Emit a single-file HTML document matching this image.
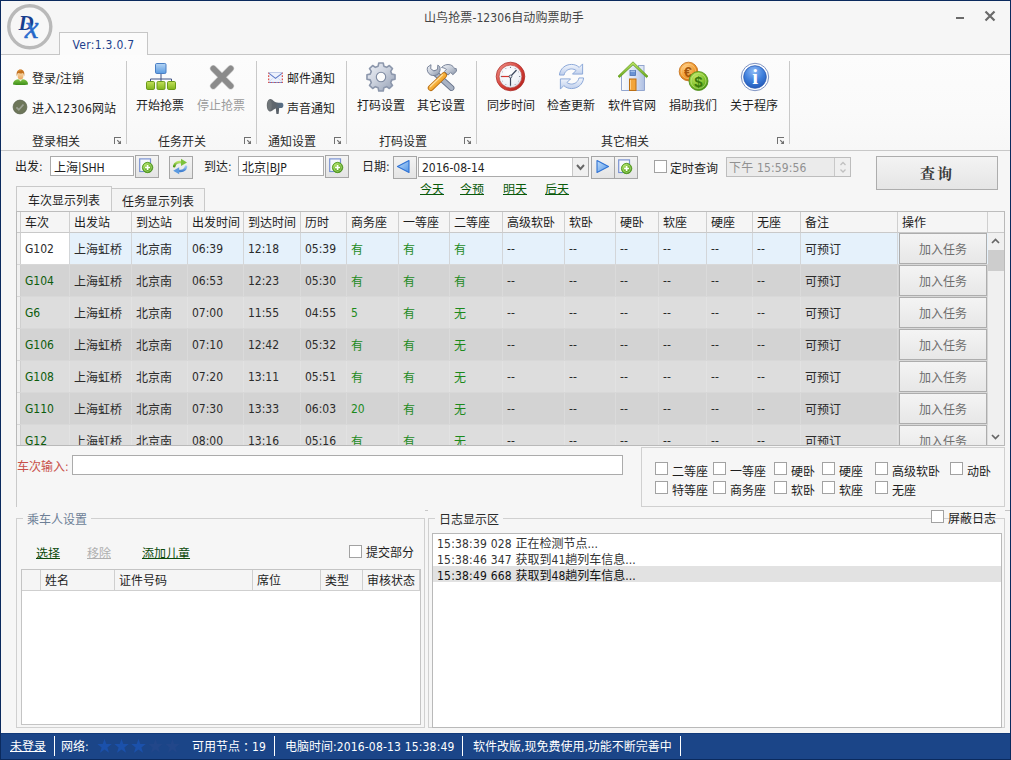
<!DOCTYPE html>
<html lang="zh-CN">
<head>
<meta charset="utf-8">
<title>山鸟抢票-12306自动购票助手</title>
<style>
*{box-sizing:border-box;margin:0;padding:0}
html,body{width:1011px;height:760px;overflow:hidden;background:#f6f6f6}
body{font-family:"DejaVu Sans Condensed","Liberation Sans","Noto Sans CJK SC",sans-serif;font-size:12px;color:#1e1e1e;line-height:16px}
#win{position:relative;width:1011px;height:760px;overflow:hidden;background:#f6f6f6}
.a{position:absolute;white-space:nowrap}
.frame{position:absolute;left:0;top:0;width:1011px;height:760px;border:1px solid #0b2a5e;pointer-events:none;z-index:50}
/* ribbon */
#titlebar{position:absolute;left:0;top:0;width:1011px;height:54px;background:#f6f6f6}
#ribbon{position:absolute;left:0;top:54px;width:1011px;height:97px;background:linear-gradient(#fcfcfc,#fafafa 60%,#f7f7f7);border-top:1px solid #c6c6c6;border-bottom:1px solid #c8c8c8}
#rtab{position:absolute;left:59px;top:32px;width:89px;letter-spacing:.3px;height:23px;background:#fbfbfb;border:1px solid #c6c6c6;border-bottom:0;color:#1d3f8c;text-align:center;line-height:24px;z-index:3}
.sep{position:absolute;top:61px;width:1px;height:83px;background:#c9c9c9}
.cap{position:absolute;top:134px;height:16px;text-align:center;color:#2a2a2a}
.lbl{position:absolute;top:98px;width:70px;text-align:center}
.dl{position:absolute;top:137px;width:8px;height:8px}
.ico{position:absolute}
/* controls */
.inp{position:absolute;background:#fff;border:1px solid #ababab;height:20px;line-height:20px;padding-left:3px}
.sbtn{position:absolute;width:24px;height:23px;border:1px solid #a6a6a6;background:linear-gradient(#f3f3f3,#e4e4e4)}
.cb{position:absolute;width:13px;height:13px;border:1px solid #a2a2a2;background:#fff}
.lnk{position:absolute;color:#0a5a0a;text-decoration:underline;text-underline-offset:0px}

/* tabs + grid */
.tab{position:absolute;border:1px solid #c9c9c9;border-bottom:0;text-align:center}
#grid{position:absolute;left:16px;top:211px;width:989px;height:235px;border:1px solid #b9b9b9;border-top-color:#bdbdbd;background:#d8d8d8;overflow:hidden}
#grid .hd{position:absolute;top:0;height:21px;line-height:22px;padding-left:4px;background:#f5f5f5;border-right:1px solid #cfcfcf;border-bottom:1px solid #c9c9c9;color:#1e1e1e}
.row{position:absolute;left:0;width:972px;height:31px}
.row i{position:absolute;top:0;height:31px;line-height:35px;padding-left:4px;font-style:normal;border-right:1px solid rgba(255,255,255,.16);color:#2b2b2b;white-space:nowrap;overflow:hidden}
.row .n{line-height:33px}
.row .g{color:#1c8a1c}
.row .t{color:#0c5c0c}
.rd{background:#d3d3d3}.rl{background:#dddddd}.rs{background:#e5f1fb}
.rs i{border-right-color:#d3d6d9}
.jb{position:absolute;left:882px;top:0;width:88px;height:31px;border:1px solid #adadad;background:linear-gradient(#f4f4f4,#e7e7e7);text-align:center;line-height:33px;color:#6e6e6e}

.gb{position:absolute;border:1px solid #d0d0d0}
.gbt{position:absolute;background:#f6f6f6;padding:0 4px;line-height:16px}
.ph{position:absolute;top:0;height:21px;line-height:23px;padding-left:4px;background:#f5f5f5;border-right:1px solid #cfcfcf;border-bottom:1px solid #cfcfcf}
#status{position:absolute;left:0;top:733px;width:1011px;height:27px;background:#1b4588;color:#fff;border-top:1px solid #123a7a}
#status .a{top:5px;color:#fff}
#status .sp{position:absolute;top:2px;width:1px;height:20px;background:#fff}
</style>
</head>
<body>
<div id="win">
<div id="titlebar"></div>
<div class="a" style="left:424px;top:10px;letter-spacing:.1px;color:#444">山鸟抢票-12306自动购票助手</div>
<svg class="a" style="left:5px;top:4px" width="50" height="50" viewBox="0 0 50 50">
<defs><linearGradient id="glx" x1="0" y1="0" x2="1" y2="1"><stop offset="0" stop-color="#3f86e0"/><stop offset="1" stop-color="#1656b8"/></linearGradient></defs>
<circle cx="24.800" cy="22.800" r="21" fill="#f7f7f7" stroke="#b9b9b9" stroke-width="3.400"/>
<text x="13.500" y="25.700" font-family="'Liberation Serif',serif" font-style="italic" font-weight="bold" font-size="21" fill="#173f8f">D</text>
<text x="19.800" y="33.600" font-family="'Liberation Serif',serif" font-style="italic" font-size="31" stroke="#2a6cd0" stroke-width=".5" fill="url(#glx)">x</text>
</svg>
<div class="a" style="left:956px;top:17px;width:8px;height:2px;background:#6a6a6a"></div>
<svg class="a" style="left:984px;top:10px" width="12" height="12" viewBox="0 0 12 12"><path d="M1.5 1.5 L10.5 10.5 M10.5 1.5 L1.5 10.5" stroke="#6a6a6a" stroke-width="2.2" fill="none"/></svg>
<div id="ribbon"></div>
<div id="rtab">Ver:1.3.0.7</div>
<svg class="ico" style="left:12px;top:69px" width="17" height="17" viewBox="0 0 17 17">
<defs><linearGradient id="gub" x1="0" y1="0" x2="0" y2="1"><stop offset="0" stop-color="#7fc544"/><stop offset="1" stop-color="#3c8c18"/></linearGradient>
<linearGradient id="guf" x1="0" y1="0" x2="0" y2="1"><stop offset="0" stop-color="#fbe0b0"/><stop offset="1" stop-color="#e9a55c"/></linearGradient></defs>
<path d="M1 15.400c0-3.200 2.300-4.700 5-5.100h5c2.700.4 5 1.900 5 5.100-3 .9-12 .9-15 0z" fill="url(#gub)"/>
<path d="M6.300 10.100l2.200 2.400 2.200-2.400z" fill="#e7f2d6"/>
<ellipse cx="8.500" cy="6.600" rx="3" ry="3.900" fill="url(#guf)"/>
<path d="M4.900 7.600C3.900 3 5.800.6 8.500.6s4.600 2.400 3.600 7c-.1-1.800-.6-3-1.300-3.700-1.300.7-3.500.7-4.700.1-.6.700-1.100 1.800-1.200 3.600z" fill="#c4721f"/>
<path d="M6 2.300c.8-.9 2-1.300 3.200-1.100" stroke="#e8a04a" stroke-width=".8" fill="none"/></svg>
<svg class="ico" style="left:12px;top:99px" width="16" height="16" viewBox="0 0 16 16">
<circle cx="8" cy="8" r="6.900" fill="#6d7659" stroke="#5d6650" stroke-width=".8"/>
<path d="M4.400 8.300l2.400 2.400 4.700-5.200" stroke="#9ca194" stroke-width="1.700" fill="none"/></svg>
<div class="a" style="left:32px;top:71px">登录/注销</div>
<div class="a" style="left:32px;top:101px">进入<span style="letter-spacing:.35px">12306</span>网站</div>
<div class="cap" style="left:16px;width:80px">登录相关</div>
<svg class="dl" style="left:114px" viewBox="0 0 8 8"><path d="M0.5 7V0.5H7" stroke="#707070" fill="none" shape-rendering="crispEdges"/><path d="M3.200 3.200L6 6" stroke="#707070" stroke-width="1.100" fill="none"/><path d="M7 3.600V7H3.600z" fill="#707070"/></svg>
<div class="sep" style="left:126px"></div>
<svg class="ico" style="left:145px;top:62px" width="32" height="30" viewBox="0 0 32 30">
<defs><linearGradient id="gb" x1="0" y1="0" x2="0" y2="1"><stop offset="0" stop-color="#b4d4f4"/><stop offset="1" stop-color="#5b9be0"/></linearGradient>
<linearGradient id="gg" x1="0" y1="0" x2="0" y2="1"><stop offset="0" stop-color="#c3e05a"/><stop offset="1" stop-color="#7fb51c"/></linearGradient></defs>
<path d="M16 11v6M5.500 21v-4h21v4M16 17v4" stroke="#3f5285" stroke-width="1" fill="none"/>
<rect x="10.500" y="1.500" width="10.500" height="10" rx="1.200" fill="url(#gb)" stroke="#4a7fc4"/>
<rect x="1.500" y="19.500" width="8" height="8" rx="1.200" fill="url(#gg)" stroke="#6a9a18"/>
<rect x="12" y="19.500" width="8" height="8" rx="1.200" fill="url(#gg)" stroke="#6a9a18"/>
<rect x="22.500" y="19.500" width="8" height="8" rx="1.200" fill="url(#gg)" stroke="#6a9a18"/></svg>
<svg class="ico" style="left:207px;top:63px" width="29" height="28" viewBox="0 0 29 28">
<defs><linearGradient id="gx" x1="0" y1="0" x2="0" y2="1" gradientUnits="userSpaceOnUse"><stop offset="0" stop-color="#c6c6c6"/><stop offset=".5" stop-color="#a8a8a8"/><stop offset="1" stop-color="#8b8b8b"/></linearGradient></defs>
<path d="M6.300 5.500L23.700 23M23.700 5.500L6.300 23" stroke="#cfcfcf" stroke-width="6.800" stroke-linecap="round" fill="none"/>
<path d="M6.300 5.500L23.700 23M23.700 5.500L6.300 23" stroke="url(#gx)" stroke-width="5.600" stroke-linecap="round" fill="none"/></svg>
<div class="lbl" style="left:125px">开始抢票</div>
<div class="lbl" style="left:186px;color:#9a9a9a">停止抢票</div>
<div class="cap" style="left:142px;width:80px">任务开关</div>
<svg class="dl" style="left:244px" viewBox="0 0 8 8"><path d="M0.5 7V0.5H7" stroke="#707070" fill="none" shape-rendering="crispEdges"/><path d="M3.200 3.200L6 6" stroke="#707070" stroke-width="1.100" fill="none"/><path d="M7 3.600V7H3.600z" fill="#707070"/></svg>
<div class="sep" style="left:256px"></div>
<svg class="ico" style="left:268px;top:72px" width="15" height="11" viewBox="0 0 16 12">
<rect x=".5" y=".5" width="15" height="11" fill="#edf2fc"/>
<path d="M1 1.500l7 5.500 7-5.500" stroke="#5b78c8" stroke-width="1.100" fill="none"/>
<path d="M1 10.500l4-3.500M15 10.500l-4-3.500" stroke="#cfd9f0" stroke-width="1" fill="none"/>
<path d="M.5 0v12" stroke="#e0564e" stroke-width="1.400" stroke-dasharray="2 1.500"/>
<path d="M15.500 0v12" stroke="#e0564e" stroke-width="1.400" stroke-dasharray="2 1.500"/>
<path d="M0 11.500h16" stroke="#e0564e" stroke-width="1.400" stroke-dasharray="1.500 1.500"/>
<path d="M1.500 11.500h16" stroke="#4f6fc6" stroke-width="1.400" stroke-dasharray="1.500 1.500"/>
<path d="M0 .5h16" stroke="#b9c6e6" stroke-width="1"/></svg>
<svg class="ico" style="left:266px;top:98px" width="18" height="17" viewBox="0 0 18 17">
<defs><linearGradient id="ghn" x1="0" y1="0" x2="1" y2="0"><stop offset="0" stop-color="#676b6e"/><stop offset=".55" stop-color="#5d656d"/><stop offset="1" stop-color="#55708c"/></linearGradient></defs>
<path d="M9.800 9.500h3.400l-.5 6c-.1.800-2.300.800-2.400 0z" fill="#596068"/>
<path d="M3.500 1.200c1.500-.5 3 .6 4.200 1.800 1.300 1.200 2.800 1.700 4.600 1.700h3.200c1.300 0 1.900 1.300 1.900 2.600s-.6 2.600-1.900 2.600h-3.200c-1.800 0-3.300.5-4.600 1.700-1.200 1.200-2.700 2.300-4.200 1.800C1.700 12.800.8 10.200.8 7.300S1.700 1.800 3.500 1.200z" fill="url(#ghn)"/>
<ellipse cx="3.600" cy="7.300" rx="2.100" ry="5.300" fill="#7a7f83" opacity=".55"/></svg>
<div class="a" style="left:287px;top:71px">邮件通知</div>
<div class="a" style="left:287px;top:101px">声音通知</div>
<div class="cap" style="left:252px;width:80px">通知设置</div>
<svg class="dl" style="left:334px" viewBox="0 0 8 8"><path d="M0.5 7V0.5H7" stroke="#707070" fill="none" shape-rendering="crispEdges"/><path d="M3.200 3.200L6 6" stroke="#707070" stroke-width="1.100" fill="none"/><path d="M7 3.600V7H3.600z" fill="#707070"/></svg>
<div class="sep" style="left:346px"></div>
<svg class="ico" style="left:365px;top:61px" width="32" height="32" viewBox="0 0 32 32">
<defs><linearGradient id="gge" x1="0" y1="0" x2="1" y2="1"><stop offset="0" stop-color="#f1f3f8"/><stop offset=".45" stop-color="#cdd3df"/><stop offset="1" stop-color="#929db2"/></linearGradient></defs>
<path d="M13.13 5.17 L13.78 1.97 L18.22 1.97 L18.87 5.17 L21.63 6.32 L24.35 4.51 L27.49 7.65 L25.68 10.37 L26.83 13.13 L30.03 13.78 L30.03 18.22 L26.83 18.87 L25.68 21.63 L27.49 24.35 L24.35 27.49 L21.63 25.68 L18.87 26.83 L18.22 30.03 L13.78 30.03 L13.13 26.83 L10.37 25.68 L7.65 27.49 L4.51 24.35 L6.32 21.63 L5.17 18.87 L1.97 18.22 L1.97 13.78 L5.17 13.13 L6.32 10.37 L4.51 7.65 L7.65 4.51 L10.37 6.32Z" fill="url(#gge)" stroke="#8c97ac" stroke-width="1.600" stroke-linejoin="round"/>
<circle cx="16" cy="16" r="4.700" fill="#fbfbfb" stroke="#7d89a0" stroke-width="1.100"/></svg>
<svg class="ico" style="left:425px;top:62px" width="32" height="30" viewBox="0 0 32 30">
<defs><linearGradient id="gor" x1="0" y1="0" x2="1" y2="1"><stop offset="0" stop-color="#ffe09a"/><stop offset=".5" stop-color="#f7b13a"/><stop offset="1" stop-color="#d97a08"/></linearGradient>
<linearGradient id="gst" x1="0" y1="0" x2="1" y2="1"><stop offset="0" stop-color="#f3f5f9"/><stop offset=".5" stop-color="#c3cad6"/><stop offset="1" stop-color="#8893a6"/></linearGradient></defs>
<path d="M10 11L26.500 26" stroke="#67738a" stroke-width="5.800" stroke-linecap="round" fill="none"/>
<path d="M10 11L26.500 26" stroke="#a9b3c4" stroke-width="4.200" stroke-linecap="round" fill="none"/>
<path d="M2.500 5.200c-.9 3.100.4 6.300 3.100 7.700 2.600 1.300 5.900.8 7.800-1.200 1.700-1.800 2.200-4.600 1.300-7.100l-1.900-1.500-.3 4.300-3.600 1.600-3.200-2.300.3-4z" fill="url(#gst)" stroke="#6f7b92" stroke-width=".9" stroke-linejoin="round"/>
<path d="M16.500 5.500c2.200-2.500 5.800-3.700 9-2.600 2.100.7 3.300 2.200 4 3.800l1.700-.2.300 2.700-3.600 3.500-2.200-2.200-2.600 2.600-3.700-3.700 2-2c-1.500-1.300-3.300-1.700-4.900-1.900z" fill="url(#gst)" stroke="#6f7b92" stroke-width=".9" stroke-linejoin="round"/>
<path d="M5.800 26L19 13.300" stroke="#b96d0e" stroke-width="6" stroke-linecap="round" fill="none"/>
<path d="M5.800 26L19 13.300" stroke="url(#gor)" stroke-width="4.400" stroke-linecap="round" fill="none"/>
<path d="M5.300 24.500L17.500 12.800" stroke="#ffe9b8" stroke-width="1.200" stroke-linecap="round" fill="none" opacity=".8"/>
</svg>
<div class="lbl" style="left:346px">打码设置</div>
<div class="lbl" style="left:406px">其它设置</div>
<div class="cap" style="left:363px;width:80px">打码设置</div>
<svg class="dl" style="left:464px" viewBox="0 0 8 8"><path d="M0.5 7V0.5H7" stroke="#707070" fill="none" shape-rendering="crispEdges"/><path d="M3.200 3.200L6 6" stroke="#707070" stroke-width="1.100" fill="none"/><path d="M7 3.600V7H3.600z" fill="#707070"/></svg>
<div class="sep" style="left:476px"></div>
<svg class="ico" style="left:495px;top:61px" width="31" height="31" viewBox="0 0 31 31">
<defs><radialGradient id="gcf" cx=".4" cy=".35" r=".75"><stop offset="0" stop-color="#ffffff"/><stop offset=".7" stop-color="#eef1f7"/><stop offset="1" stop-color="#cfd6e4"/></radialGradient>
<linearGradient id="gcr" x1="0" y1="0" x2="1" y2="1"><stop offset="0" stop-color="#f39a90"/><stop offset=".5" stop-color="#d6423a"/><stop offset="1" stop-color="#b01c18"/></linearGradient></defs>
<circle cx="15.500" cy="15.500" r="14.300" fill="url(#gcr)" stroke="#a82622" stroke-width=".7"/>
<circle cx="15.500" cy="15.500" r="11.400" fill="url(#gcf)" stroke="#b9463f" stroke-width=".7"/>
<path d="M15.500 15.500L21.500 9" stroke="#3a465c" stroke-width="1.200"/><path d="M15.500 15.500v9" stroke="#3a465c" stroke-width="1.200"/><path d="M15.500 15.500H6" stroke="#d5362f" stroke-width="1.200"/>
<circle cx="15.500" cy="15.500" r="1.400" fill="#e9edf4" stroke="#3a465c" stroke-width=".8"/>
<g fill="#5d6779"><circle cx="15.500" cy="6.300" r=".6"/><circle cx="24.700" cy="15.500" r=".6"/><circle cx="15.500" cy="24.700" r=".6"/><circle cx="6.300" cy="15.500" r=".6"/><circle cx="20.100" cy="7.500" r=".45"/><circle cx="23.500" cy="10.900" r=".45"/><circle cx="23.500" cy="20.100" r=".45"/><circle cx="20.100" cy="23.500" r=".45"/><circle cx="10.900" cy="23.500" r=".45"/><circle cx="7.500" cy="20.100" r=".45"/><circle cx="7.500" cy="10.900" r=".45"/><circle cx="10.900" cy="7.500" r=".45"/></g></svg>
<svg class="ico" style="left:557px;top:62px" width="29" height="29" viewBox="0 0 30 30">
<defs><linearGradient id="grf" x1="0" y1="0" x2="0" y2="1"><stop offset="0" stop-color="#f4f7fd"/><stop offset="1" stop-color="#bccdeb"/></linearGradient></defs>
<path d="M2.500 13.500C3 7 8.500 2.500 15 2.500c3.300 0 6 1.200 8 3.100L26.500 2v10.500H16l3.700-3.700C18.500 7.800 16.800 7.200 15 7.200c-3.800 0-7 2.600-7.700 6.300z" fill="url(#grf)" stroke="#8aa7d8" stroke-width="1" stroke-linejoin="round"/>
<path d="M27.500 16.500C27 23 21.500 27.500 15 27.500c-3.300 0-6-1.200-8-3.100L3.500 28V17.500H14l-3.700 3.700c1.200 1 2.900 1.600 4.700 1.600 3.800 0 7-2.600 7.700-6.300z" fill="url(#grf)" stroke="#8aa7d8" stroke-width="1" stroke-linejoin="round"/></svg>
<svg class="ico" style="left:617px;top:60px" width="32" height="32" viewBox="0 0 32 32">
<defs><linearGradient id="ghw" x1="0" y1="0" x2="1" y2="0"><stop offset="0" stop-color="#fbfcfe"/><stop offset=".5" stop-color="#dfe7f6"/><stop offset="1" stop-color="#aebfe2"/></linearGradient>
<linearGradient id="ghr" x1="0" y1="0" x2="0" y2="1"><stop offset="0" stop-color="#c2e86a"/><stop offset="1" stop-color="#67a818"/></linearGradient></defs>
<rect x="21.500" y="5.500" width="5.500" height="9" fill="#dfe6f5" stroke="#93a6cf" stroke-width="1"/>
<path d="M4.500 15L16 4.500 27.500 15v15.500h-23z" fill="url(#ghw)" stroke="#93a6cf" stroke-width="1"/>
<path d="M1 16.200L16 1.800 31 16.200l-1.500 1.400L16 4.800 2.500 17.600z" fill="url(#ghr)" stroke="#5a9614" stroke-width=".7" stroke-linejoin="round"/>
<rect x="12.500" y="19" width="6.500" height="11.500" fill="#f3a53a" stroke="#bb6f14" stroke-width="1"/>
<path d="M13.500 20v9.500" stroke="#ffd08a" stroke-width="1"/>
<rect x="13" y="10.500" width="5.500" height="5" fill="#6a93d4" stroke="#4a70b2" stroke-width=".8"/>
<path d="M13.500 11.200h4.500" stroke="#b9d0f0" stroke-width="1"/></svg>
<svg class="ico" style="left:678px;top:61px" width="32" height="31" viewBox="0 0 32 31">
<defs><radialGradient id="gco" cx=".38" cy=".32" r=".75"><stop offset="0" stop-color="#ffd08a"/><stop offset=".6" stop-color="#f09a30"/><stop offset="1" stop-color="#c9660a"/></radialGradient>
<radialGradient id="gcg" cx=".38" cy=".32" r=".75"><stop offset="0" stop-color="#c3e86a"/><stop offset=".6" stop-color="#7fc02a"/><stop offset="1" stop-color="#3f8a10"/></radialGradient></defs>
<circle cx="10.500" cy="10.500" r="9.300" fill="url(#gco)" stroke="#c16a10" stroke-width=".8"/>
<circle cx="10.500" cy="10.500" r="7.200" fill="none" stroke="#ffdca0" stroke-width=".8" opacity=".6"/>
<text x="9.800" y="15.500" text-anchor="middle" font-family="'Liberation Sans',sans-serif" font-weight="bold" font-size="14" fill="#a4550c">€</text>
<circle cx="20.500" cy="20" r="9.500" fill="url(#gcg)" stroke="#4a8c14" stroke-width=".8"/>
<circle cx="20.500" cy="20" r="7.500" fill="none" stroke="#d2f09a" stroke-width=".8" opacity=".7"/>
<text x="20.500" y="25.500" text-anchor="middle" font-family="'Liberation Sans',sans-serif" font-weight="bold" font-size="15" fill="#3a7a0c">$</text></svg>
<svg class="ico" style="left:739px;top:61px" width="32" height="32" viewBox="0 0 32 32">
<defs><radialGradient id="gin" cx=".45" cy=".25" r=".85"><stop offset="0" stop-color="#8fbaf5"/><stop offset=".5" stop-color="#3f7fdc"/><stop offset="1" stop-color="#1a4fae"/></radialGradient></defs>
<circle cx="16" cy="16" r="13.700" fill="#fafcff" stroke="#7f93c2" stroke-width="1"/>
<circle cx="16" cy="16" r="11.300" fill="url(#gin)" stroke="#2c5cb4" stroke-width=".8"/>
<text x="16.200" y="23.300" text-anchor="middle" font-family="'Liberation Serif',serif" font-weight="bold" font-size="21" fill="#fff">i</text></svg>
<div class="lbl" style="left:476px">同步时间</div>
<div class="lbl" style="left:536px">检查更新</div>
<div class="lbl" style="left:597px">软件官网</div>
<div class="lbl" style="left:658px">捐助我们</div>
<div class="lbl" style="left:719px">关于程序</div>
<div class="cap" style="left:585px;width:80px">其它相关</div>
<svg class="dl" style="left:777px" viewBox="0 0 8 8"><path d="M0.5 7V0.5H7" stroke="#707070" fill="none" shape-rendering="crispEdges"/><path d="M3.200 3.200L6 6" stroke="#707070" stroke-width="1.100" fill="none"/><path d="M7 3.600V7H3.600z" fill="#707070"/></svg>
<div class="sep" style="left:789px"></div>
<div class="a" style="left:15px;top:159px">出发:</div>
<div class="inp" style="left:50px;top:156px;width:84px;line-height:22px">上海|SHH</div>
<div class="sbtn" style="left:135px;top:155px"><svg style="position:absolute;left:0;top:0" width="22" height="21" viewBox="0 0 22 21">
<defs><radialGradient id="gpp" cx=".35" cy=".3" r=".8"><stop offset="0" stop-color="#a5dc55"/><stop offset=".6" stop-color="#62ad1f"/><stop offset="1" stop-color="#3c8a10"/></radialGradient></defs>
<rect x="3.700" y="2.900" width="10.800" height="12.600" fill="#f6f8fd" stroke="#7a92d2" stroke-width="1.200"/>
<circle cx="11.600" cy="11.500" r="5.200" fill="url(#gpp)" stroke="#4a9416" stroke-width=".8"/>
<circle cx="11.600" cy="11.500" r="3.900" fill="none" stroke="#d6f0b4" stroke-width=".7" opacity=".75"/><path d="M11.600 9v5M9.100 11.500h5" stroke="#fff" stroke-width="1.600"/></svg></div>
<div class="sbtn" style="left:169px;top:156px"><svg style="position:absolute;left:0;top:0" width="22" height="21" viewBox="0 0 22 21">
<defs><linearGradient id="grg" x1="0" y1="0" x2="0" y2="1"><stop offset="0" stop-color="#b5e26a"/><stop offset="1" stop-color="#4f9a14"/></linearGradient>
<linearGradient id="grb" x1="0" y1="0" x2="0" y2="1"><stop offset="0" stop-color="#9cc6f2"/><stop offset="1" stop-color="#3f7fd0"/></linearGradient></defs>
<path d="M4.200 9.200C4.800 5.700 8.300 4.300 12 5.300" stroke="url(#grg)" stroke-width="2.600" fill="none" stroke-linecap="round"/>
<path d="M11 1.800l6 3.600-6 3.500z" fill="#7cc23a"/>
<path d="M16 9.800c-.6 3.500-4.100 4.900-7.800 3.900" stroke="url(#grb)" stroke-width="2.600" fill="none" stroke-linecap="round"/>
<path d="M9.200 10.200l-6 3.600 6 3.500z" fill="#5b9ae0"/></svg></div>
<div class="a" style="left:204px;top:159px">到达:</div>
<div class="inp" style="left:238px;top:156px;width:86px;line-height:22px">北京|BJP</div>
<div class="sbtn" style="left:325px;top:155px"><svg style="position:absolute;left:0;top:0" width="22" height="21" viewBox="0 0 22 21">
<defs><radialGradient id="gpp" cx=".35" cy=".3" r=".8"><stop offset="0" stop-color="#a5dc55"/><stop offset=".6" stop-color="#62ad1f"/><stop offset="1" stop-color="#3c8a10"/></radialGradient></defs>
<rect x="3.700" y="2.900" width="10.800" height="12.600" fill="#f6f8fd" stroke="#7a92d2" stroke-width="1.200"/>
<circle cx="11.600" cy="11.500" r="5.200" fill="url(#gpp)" stroke="#4a9416" stroke-width=".8"/>
<circle cx="11.600" cy="11.500" r="3.900" fill="none" stroke="#d6f0b4" stroke-width=".7" opacity=".75"/><path d="M11.600 9v5M9.100 11.500h5" stroke="#fff" stroke-width="1.600"/></svg></div>
<div class="a" style="left:362px;top:159px">日期:</div>
<div class="sbtn" style="left:393px;top:156px"><svg style="position:absolute;left:0;top:0" width="22" height="21" viewBox="0 0 22 21">
<defs><linearGradient id="garl" x1="0" y1="0" x2="1" y2="1"><stop offset="0" stop-color="#c4dffa"/><stop offset="1" stop-color="#4f93e6"/></linearGradient></defs>
<polygon points="15 3.500 3.500 9.500 15 15.500" fill="url(#garl)" stroke="#2f72d4" stroke-width="1.100" stroke-linejoin="round" transform="translate(0 0)"/></svg></div>
<div class="inp" style="left:418px;top:157px;width:171px;padding-left:3px;line-height:20px">2016-08-14<div style="position:absolute;right:0;top:0;width:16px;height:18px;border-left:1px solid #c8c8c8;background:#f0f0f0"><svg style="position:absolute;left:3px;top:6px" width="9" height="7" viewBox="0 0 9 7"><path d="M1 1l3.500 4L8 1" stroke="#666" stroke-width="1.900" fill="none"/></svg></div></div>
<div class="sbtn" style="left:591px;top:156px"><svg style="position:absolute;left:0;top:0" width="22" height="21" viewBox="0 0 22 21">
<defs><linearGradient id="garr" x1="0" y1="0" x2="1" y2="1"><stop offset="0" stop-color="#c4dffa"/><stop offset="1" stop-color="#4f93e6"/></linearGradient></defs>
<polygon points="3.500 3.500 15 9.500 3.500 15.500" fill="url(#garr)" stroke="#2f72d4" stroke-width="1.100" stroke-linejoin="round" transform="translate(1.5 0)"/></svg></div>
<div class="sbtn" style="left:614px;top:156px"><svg style="position:absolute;left:0;top:0" width="22" height="21" viewBox="0 0 22 21">
<defs><radialGradient id="gpp" cx=".35" cy=".3" r=".8"><stop offset="0" stop-color="#a5dc55"/><stop offset=".6" stop-color="#62ad1f"/><stop offset="1" stop-color="#3c8a10"/></radialGradient></defs>
<rect x="3.700" y="2.900" width="10.800" height="12.600" fill="#f6f8fd" stroke="#7a92d2" stroke-width="1.200"/>
<circle cx="11.600" cy="11.500" r="5.200" fill="url(#gpp)" stroke="#4a9416" stroke-width=".8"/>
<circle cx="11.600" cy="11.500" r="3.900" fill="none" stroke="#d6f0b4" stroke-width=".7" opacity=".75"/><path d="M11.600 9v5M9.100 11.500h5" stroke="#fff" stroke-width="1.600"/></svg></div>
<div class="cb" style="left:654px;top:160px"></div>
<div class="a" style="left:670px;top:161px">定时查询</div>
<div class="inp" style="left:726px;top:157px;width:125px;height:20px;background:#ebebeb;border-color:#bdbdbd;color:#919191;line-height:20px;padding-left:2px;letter-spacing:.15px">下午 15:59:56<div style="position:absolute;right:0;top:0;width:16px;height:18px;border-left:1px solid #c8c8c8;background:#efefef"><svg style="position:absolute;left:4px;top:3px" width="8" height="13" viewBox="0 0 8 13"><path d="M1.500 4l2.500-2.500L6.500 4M1.500 8.500l2.500 2.500 2.500-2.500" stroke="#c0c0c0" stroke-width="1.300" fill="none"/></svg></div></div>
<div class="a" style="left:876px;top:156px;width:122px;height:34px;border:1px solid #adadad;background:linear-gradient(#f3f3f3,#e5e5e5);text-align:center;line-height:32px;font-family:'Noto Serif CJK SC','Liberation Serif',serif;font-weight:bold;font-size:15px;letter-spacing:2px;color:#3a3a3a">查询</div>
<div class="lnk" style="left:420px;top:182px">今天</div>
<div class="lnk" style="left:460px;top:182px">今预</div>
<div class="lnk" style="left:503px;top:182px">明天</div>
<div class="lnk" style="left:545px;top:182px">后天</div>
<div class="a" style="left:16px;top:186px;width:1px;height:321px;background:#cacaca"></div>
<div class="tab" style="left:16px;top:186px;width:96px;height:25px;line-height:29px;background:#f6f6f6">车次显示列表</div>
<div class="tab" style="left:111px;top:188px;width:94px;height:23px;line-height:27px;background:#f3f3f3">任务显示列表</div>
<div id="grid">
<div class="hd" style="left:0px;width:4px;padding:0;"></div>
<div class="hd" style="left:4px;width:49px;">车次</div>
<div class="hd" style="left:53px;width:62px;">出发站</div>
<div class="hd" style="left:115px;width:56px;">到达站</div>
<div class="hd" style="left:171px;width:56px;">出发时间</div>
<div class="hd" style="left:227px;width:57px;">到达时间</div>
<div class="hd" style="left:284px;width:46px;">历时</div>
<div class="hd" style="left:330px;width:52px;">商务座</div>
<div class="hd" style="left:382px;width:51px;">一等座</div>
<div class="hd" style="left:433px;width:53px;">二等座</div>
<div class="hd" style="left:486px;width:62px;">高级软卧</div>
<div class="hd" style="left:548px;width:51px;">软卧</div>
<div class="hd" style="left:599px;width:43px;">硬卧</div>
<div class="hd" style="left:642px;width:48px;">软座</div>
<div class="hd" style="left:690px;width:46px;">硬座</div>
<div class="hd" style="left:736px;width:48px;">无座</div>
<div class="hd" style="left:784px;width:97px;">备注</div>
<div class="hd" style="left:881px;width:90px;">操作</div>
<div class="hd" style="left:971px;width:16px;padding:0;border-right:0"></div>
<div class="row rs" style="top:21px">
<i style="left:0px;width:4px;padding:0;background:#f1f1f1;border-right-color:#cfcfcf;"></i>
<i class="n" style="left:4px;width:49px;background:#fff;">G102</i>
<i style="left:53px;width:62px;">上海虹桥</i>
<i style="left:115px;width:56px;">北京南</i>
<i class="n" style="left:171px;width:56px;">06:39</i>
<i class="n" style="left:227px;width:57px;">12:18</i>
<i class="n" style="left:284px;width:46px;">05:39</i>
<i class="g" style="left:330px;width:52px;">有</i>
<i class="g" style="left:382px;width:51px;">有</i>
<i class="g" style="left:433px;width:53px;">有</i>
<i class="n" style="left:486px;width:62px;">--</i>
<i class="n" style="left:548px;width:51px;">--</i>
<i class="n" style="left:599px;width:43px;">--</i>
<i class="n" style="left:642px;width:48px;">--</i>
<i class="n" style="left:690px;width:46px;">--</i>
<i class="n" style="left:736px;width:48px;">--</i>
<i style="left:784px;width:97px;">可预订</i>
<div class="jb">加入任务</div></div>
<div class="row rd" style="top:53px">
<i style="left:0px;width:4px;padding:0;background:#f1f1f1;border-right-color:#cfcfcf;"></i>
<i class="t n" style="left:4px;width:49px;">G104</i>
<i style="left:53px;width:62px;">上海虹桥</i>
<i style="left:115px;width:56px;">北京南</i>
<i class="n" style="left:171px;width:56px;">06:53</i>
<i class="n" style="left:227px;width:57px;">12:23</i>
<i class="n" style="left:284px;width:46px;">05:30</i>
<i class="g" style="left:330px;width:52px;">有</i>
<i class="g" style="left:382px;width:51px;">有</i>
<i class="g" style="left:433px;width:53px;">有</i>
<i class="n" style="left:486px;width:62px;">--</i>
<i class="n" style="left:548px;width:51px;">--</i>
<i class="n" style="left:599px;width:43px;">--</i>
<i class="n" style="left:642px;width:48px;">--</i>
<i class="n" style="left:690px;width:46px;">--</i>
<i class="n" style="left:736px;width:48px;">--</i>
<i style="left:784px;width:97px;">可预订</i>
<div class="jb">加入任务</div></div>
<div class="row rl" style="top:85px">
<i style="left:0px;width:4px;padding:0;background:#f1f1f1;border-right-color:#cfcfcf;"></i>
<i class="t n" style="left:4px;width:49px;">G6</i>
<i style="left:53px;width:62px;">上海虹桥</i>
<i style="left:115px;width:56px;">北京南</i>
<i class="n" style="left:171px;width:56px;">07:00</i>
<i class="n" style="left:227px;width:57px;">11:55</i>
<i class="n" style="left:284px;width:46px;">04:55</i>
<i class="g n" style="left:330px;width:52px;">5</i>
<i class="g" style="left:382px;width:51px;">有</i>
<i class="g" style="left:433px;width:53px;">无</i>
<i class="n" style="left:486px;width:62px;">--</i>
<i class="n" style="left:548px;width:51px;">--</i>
<i class="n" style="left:599px;width:43px;">--</i>
<i class="n" style="left:642px;width:48px;">--</i>
<i class="n" style="left:690px;width:46px;">--</i>
<i class="n" style="left:736px;width:48px;">--</i>
<i style="left:784px;width:97px;">可预订</i>
<div class="jb">加入任务</div></div>
<div class="row rd" style="top:117px">
<i style="left:0px;width:4px;padding:0;background:#f1f1f1;border-right-color:#cfcfcf;"></i>
<i class="t n" style="left:4px;width:49px;">G106</i>
<i style="left:53px;width:62px;">上海虹桥</i>
<i style="left:115px;width:56px;">北京南</i>
<i class="n" style="left:171px;width:56px;">07:10</i>
<i class="n" style="left:227px;width:57px;">12:42</i>
<i class="n" style="left:284px;width:46px;">05:32</i>
<i class="g" style="left:330px;width:52px;">有</i>
<i class="g" style="left:382px;width:51px;">有</i>
<i class="g" style="left:433px;width:53px;">无</i>
<i class="n" style="left:486px;width:62px;">--</i>
<i class="n" style="left:548px;width:51px;">--</i>
<i class="n" style="left:599px;width:43px;">--</i>
<i class="n" style="left:642px;width:48px;">--</i>
<i class="n" style="left:690px;width:46px;">--</i>
<i class="n" style="left:736px;width:48px;">--</i>
<i style="left:784px;width:97px;">可预订</i>
<div class="jb">加入任务</div></div>
<div class="row rl" style="top:149px">
<i style="left:0px;width:4px;padding:0;background:#f1f1f1;border-right-color:#cfcfcf;"></i>
<i class="t n" style="left:4px;width:49px;">G108</i>
<i style="left:53px;width:62px;">上海虹桥</i>
<i style="left:115px;width:56px;">北京南</i>
<i class="n" style="left:171px;width:56px;">07:20</i>
<i class="n" style="left:227px;width:57px;">13:11</i>
<i class="n" style="left:284px;width:46px;">05:51</i>
<i class="g" style="left:330px;width:52px;">有</i>
<i class="g" style="left:382px;width:51px;">有</i>
<i class="g" style="left:433px;width:53px;">无</i>
<i class="n" style="left:486px;width:62px;">--</i>
<i class="n" style="left:548px;width:51px;">--</i>
<i class="n" style="left:599px;width:43px;">--</i>
<i class="n" style="left:642px;width:48px;">--</i>
<i class="n" style="left:690px;width:46px;">--</i>
<i class="n" style="left:736px;width:48px;">--</i>
<i style="left:784px;width:97px;">可预订</i>
<div class="jb">加入任务</div></div>
<div class="row rd" style="top:181px">
<i style="left:0px;width:4px;padding:0;background:#f1f1f1;border-right-color:#cfcfcf;"></i>
<i class="t n" style="left:4px;width:49px;">G110</i>
<i style="left:53px;width:62px;">上海虹桥</i>
<i style="left:115px;width:56px;">北京南</i>
<i class="n" style="left:171px;width:56px;">07:30</i>
<i class="n" style="left:227px;width:57px;">13:33</i>
<i class="n" style="left:284px;width:46px;">06:03</i>
<i class="g n" style="left:330px;width:52px;">20</i>
<i class="g" style="left:382px;width:51px;">有</i>
<i class="g" style="left:433px;width:53px;">无</i>
<i class="n" style="left:486px;width:62px;">--</i>
<i class="n" style="left:548px;width:51px;">--</i>
<i class="n" style="left:599px;width:43px;">--</i>
<i class="n" style="left:642px;width:48px;">--</i>
<i class="n" style="left:690px;width:46px;">--</i>
<i class="n" style="left:736px;width:48px;">--</i>
<i style="left:784px;width:97px;">可预订</i>
<div class="jb">加入任务</div></div>
<div class="row rl" style="top:213px">
<i style="left:0px;width:4px;padding:0;background:#f1f1f1;border-right-color:#cfcfcf;"></i>
<i class="t n" style="left:4px;width:49px;">G12</i>
<i style="left:53px;width:62px;">上海虹桥</i>
<i style="left:115px;width:56px;">北京南</i>
<i class="n" style="left:171px;width:56px;">08:00</i>
<i class="n" style="left:227px;width:57px;">13:16</i>
<i class="n" style="left:284px;width:46px;">05:16</i>
<i class="g" style="left:330px;width:52px;">有</i>
<i class="g" style="left:382px;width:51px;">有</i>
<i class="g" style="left:433px;width:53px;">无</i>
<i class="n" style="left:486px;width:62px;">--</i>
<i class="n" style="left:548px;width:51px;">--</i>
<i class="n" style="left:599px;width:43px;">--</i>
<i class="n" style="left:642px;width:48px;">--</i>
<i class="n" style="left:690px;width:46px;">--</i>
<i class="n" style="left:736px;width:48px;">--</i>
<i style="left:784px;width:97px;">可预订</i>
<div class="jb">加入任务</div></div>
<div style="position:absolute;left:971px;top:21px;width:16px;height:213px;background:#f0f0f0">
<svg style="position:absolute;left:3px;top:5px" width="9" height="6" viewBox="0 0 9 6"><path d="M1 5l3.500-3.500L8 5" stroke="#666" stroke-width="1.700" fill="none"/></svg>
<div style="position:absolute;left:0;top:17px;width:16px;height:21px;background:#cdcdcd"></div>
<svg style="position:absolute;left:3px;top:201px" width="9" height="6" viewBox="0 0 9 6"><path d="M1 1l3.500 3.500L8 1" stroke="#666" stroke-width="1.700" fill="none"/></svg>
</div>
</div>
<div class="a" style="left:17px;top:459px;color:#c8504a">车次输入:</div>
<div class="inp" style="left:72px;top:455px;width:551px"></div>
<div class="a" style="left:425px;top:510px;width:3px;height:1px;background:#c8c8c8"></div><div class="a" style="left:1005px;top:510px;width:5px;height:1px;background:#c4c4c4"></div>
<div class="gb" style="left:641px;top:447px;width:364px;height:60px"></div>
<div class="cb" style="left:655px;top:462px"></div><div class="a" style="left:672px;top:464px">二等座</div>
<div class="cb" style="left:713px;top:462px"></div><div class="a" style="left:730px;top:464px">一等座</div>
<div class="cb" style="left:774px;top:462px"></div><div class="a" style="left:791px;top:464px">硬卧</div>
<div class="cb" style="left:822px;top:462px"></div><div class="a" style="left:839px;top:464px">硬座</div>
<div class="cb" style="left:875px;top:462px"></div><div class="a" style="left:892px;top:464px">高级软卧</div>
<div class="cb" style="left:950px;top:462px"></div><div class="a" style="left:967px;top:464px">动卧</div>
<div class="cb" style="left:655px;top:481px"></div><div class="a" style="left:672px;top:483px">特等座</div>
<div class="cb" style="left:713px;top:481px"></div><div class="a" style="left:730px;top:483px">商务座</div>
<div class="cb" style="left:774px;top:481px"></div><div class="a" style="left:791px;top:483px">软卧</div>
<div class="cb" style="left:822px;top:481px"></div><div class="a" style="left:839px;top:483px">软座</div>
<div class="cb" style="left:875px;top:481px"></div><div class="a" style="left:892px;top:483px">无座</div>
<div class="gb" style="left:16px;top:518px;width:409px;height:210px"></div>
<div class="gbt" style="left:23px;top:512px;color:#6d7f96">乘车人设置</div>
<div class="lnk" style="left:36px;top:546px;color:#0c4a0c">选择</div>
<div class="lnk" style="left:87px;top:546px;color:#b0b0b0">移除</div>
<div class="lnk" style="left:142px;top:546px;color:#0c4a0c">添加儿童</div>
<div class="cb" style="left:349px;top:545px"></div><div class="a" style="left:366px;top:545px">提交部分</div>
<div class="a" style="left:21px;top:569px;width:400px;height:156px;background:#fff;border:1px solid #c4c4c4;overflow:hidden">
<div class="ph" style="left:0px;width:19px"></div>
<div class="ph" style="left:19px;width:74px">姓名</div>
<div class="ph" style="left:93px;width:138px">证件号码</div>
<div class="ph" style="left:231px;width:68px">席位</div>
<div class="ph" style="left:299px;width:42px">类型</div>
<div class="ph" style="left:341px;width:57px">审核状态</div>
</div>
<div class="gb" style="left:428px;top:518px;width:577px;height:210px"></div>
<div class="gbt" style="left:435px;top:512px;color:#2a2a2a">日志显示区</div>
<div class="cb" style="left:931px;top:510px"></div><div class="a" style="left:948px;top:511px">屏蔽日志</div>
<div class="a" style="left:432px;top:533px;width:570px;height:195px;background:#fff;border:1px solid #b9b9b9;overflow:hidden">
<div class="a" style="left:0;top:32px;width:568px;height:16px;background:#e2e2e2"></div>
<div class="a" style="left:4px;top:2px;color:#333"><span style="letter-spacing:.2px">15:38:39 028 </span>正在检测节点...</div>
<div class="a" style="left:4px;top:18px;color:#333"><span style="letter-spacing:.2px">15:38:46 347 </span>获取到41趟列车信息...</div>
<div class="a" style="left:4px;top:34px;color:#111"><span style="letter-spacing:.2px">15:38:49 668 </span>获取到48趟列车信息...</div>
</div>
<div id="status">
<div class="a" style="left:10px;text-decoration:underline;text-underline-offset:0px">未登录</div>
<div class="sp" style="left:54px"></div>
<div class="a" style="left:61px">网络:</div>
<svg class="a" style="left:97px;top:5px" width="15" height="14" viewBox="0 0 15 14"><path d="M7.500 0l1.800 5.100h5.400l-4.300 3.300 1.600 5.300-4.500-3.200-4.500 3.200 1.600-5.300L.3 5.100h5.400z" fill="#1b51ab"/></svg>
<svg class="a" style="left:114px;top:5px" width="15" height="14" viewBox="0 0 15 14"><path d="M7.500 0l1.800 5.100h5.400l-4.300 3.300 1.600 5.300-4.500-3.200-4.500 3.200 1.600-5.300L.3 5.100h5.400z" fill="#1b51ab"/></svg>
<svg class="a" style="left:131px;top:5px" width="15" height="14" viewBox="0 0 15 14"><path d="M7.500 0l1.800 5.100h5.400l-4.300 3.300 1.600 5.300-4.500-3.200-4.500 3.200 1.600-5.300L.3 5.100h5.400z" fill="#1b51ab"/></svg>
<svg class="a" style="left:148px;top:5px" width="15" height="14" viewBox="0 0 15 14"><path d="M7.500 0l1.800 5.100h5.400l-4.300 3.300 1.600 5.300-4.500-3.200-4.500 3.200 1.600-5.300L.3 5.100h5.400z" fill="#22478a"/></svg>
<svg class="a" style="left:165px;top:5px" width="15" height="14" viewBox="0 0 15 14"><path d="M7.500 0l1.800 5.100h5.400l-4.300 3.300 1.600 5.300-4.500-3.200-4.500 3.200 1.600-5.300L.3 5.100h5.400z" fill="#22478a"/></svg>
<div class="a" style="left:192px">可用节点<span style="position:relative;left:3px">：</span>19</div>
<div class="sp" style="left:274px"></div>
<div class="a" style="left:285px">电脑时间:<span style="letter-spacing:.17px">2016-08-13 15:38:49</span></div>
<div class="sp" style="left:462px"></div>
<div class="a" style="left:473px">软件改版,现免费使用,功能不断完善中</div>
<div class="sp" style="left:680px"></div>
</div>
<div class="frame"></div>
</div>
</body>
</html>
